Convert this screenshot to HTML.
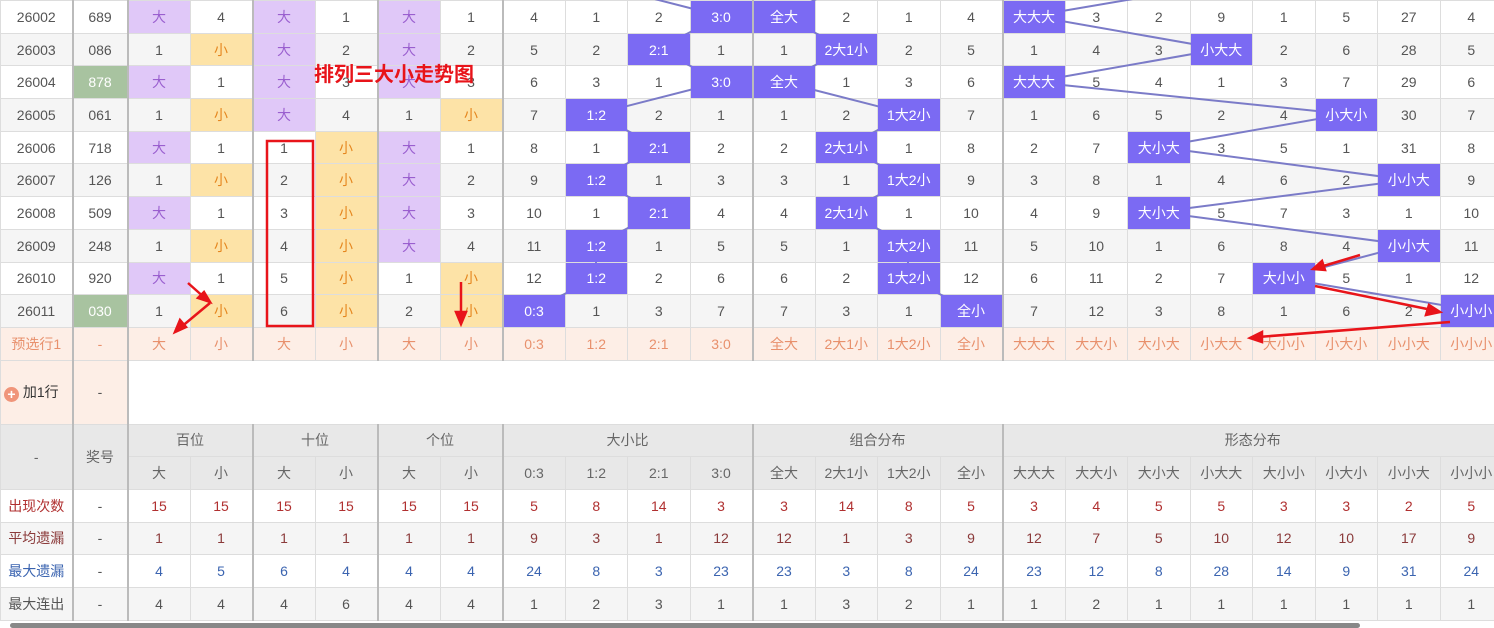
<!DOCTYPE html>
<html><head><meta charset="utf-8"><style>
html,body{margin:0;padding:0;width:1494px;height:628px;overflow:hidden;background:#fff}
body{position:relative;font-family:"Liberation Sans","Noto Sans CJK SC",sans-serif;font-size:14px;color:#555}
table{border-collapse:collapse;table-layout:fixed;width:1502px;position:absolute;left:0;top:0}
td{border:1px solid #ddd;text-align:center;padding:0;height:32.7px;box-sizing:border-box;white-space:nowrap;overflow:hidden}
tr.d td:nth-child(2),tr.d td:nth-child(3),tr.d td:nth-child(5),tr.d td:nth-child(7),tr.d td:nth-child(9),tr.d td:nth-child(13),tr.d td:nth-child(17){border-left:2px solid #bbb}
tr.g td{background:#f5f5f5}
td.b{background:#e0c8f8 !important;color:#9a5fcf}
td.s{background:#fde3a7 !important;color:#e5861e}
td.h{background:#7b6af3 !important;color:#fff;position:relative;z-index:3}
td.w{background:#a8c3a0 !important;color:#fff}
tr.p td{background:#fdeee6;color:#e8906c}
tr.hd td{background:#e8e8e8;color:#666}
.r1{color:#b03030}.r2{color:#8b3a3a}.r3{color:#3b64b0}.r4{color:#555}
svg{position:absolute;left:0;top:0;z-index:2;pointer-events:none}
</style></head><body>
<table>
<colgroup><col style="width:72px"><col style="width:55px"><col span="22" style="width:62.5px"></colgroup>
<tr class="d"><td>26002</td><td>689</td><td class="b">大</td><td>4</td><td class="b">大</td><td>1</td><td class="b">大</td><td>1</td><td>4</td><td>1</td><td>2</td><td class="h">3:0</td><td class="h">全大</td><td>2</td><td>1</td><td>4</td><td class="h">大大大</td><td>3</td><td>2</td><td>9</td><td>1</td><td>5</td><td>27</td><td>4</td></tr>
<tr class="d g"><td>26003</td><td>086</td><td>1</td><td class="s">小</td><td class="b">大</td><td>2</td><td class="b">大</td><td>2</td><td>5</td><td>2</td><td class="h">2:1</td><td>1</td><td>1</td><td class="h">2大1小</td><td>2</td><td>5</td><td>1</td><td>4</td><td>3</td><td class="h">小大大</td><td>2</td><td>6</td><td>28</td><td>5</td></tr>
<tr class="d"><td>26004</td><td class="w">878</td><td class="b">大</td><td>1</td><td class="b">大</td><td>3</td><td class="b">大</td><td>3</td><td>6</td><td>3</td><td>1</td><td class="h">3:0</td><td class="h">全大</td><td>1</td><td>3</td><td>6</td><td class="h">大大大</td><td>5</td><td>4</td><td>1</td><td>3</td><td>7</td><td>29</td><td>6</td></tr>
<tr class="d g"><td>26005</td><td>061</td><td>1</td><td class="s">小</td><td class="b">大</td><td>4</td><td>1</td><td class="s">小</td><td>7</td><td class="h">1:2</td><td>2</td><td>1</td><td>1</td><td>2</td><td class="h">1大2小</td><td>7</td><td>1</td><td>6</td><td>5</td><td>2</td><td>4</td><td class="h">小大小</td><td>30</td><td>7</td></tr>
<tr class="d"><td>26006</td><td>718</td><td class="b">大</td><td>1</td><td>1</td><td class="s">小</td><td class="b">大</td><td>1</td><td>8</td><td>1</td><td class="h">2:1</td><td>2</td><td>2</td><td class="h">2大1小</td><td>1</td><td>8</td><td>2</td><td>7</td><td class="h">大小大</td><td>3</td><td>5</td><td>1</td><td>31</td><td>8</td></tr>
<tr class="d g"><td>26007</td><td>126</td><td>1</td><td class="s">小</td><td>2</td><td class="s">小</td><td class="b">大</td><td>2</td><td>9</td><td class="h">1:2</td><td>1</td><td>3</td><td>3</td><td>1</td><td class="h">1大2小</td><td>9</td><td>3</td><td>8</td><td>1</td><td>4</td><td>6</td><td>2</td><td class="h">小小大</td><td>9</td></tr>
<tr class="d"><td>26008</td><td>509</td><td class="b">大</td><td>1</td><td>3</td><td class="s">小</td><td class="b">大</td><td>3</td><td>10</td><td>1</td><td class="h">2:1</td><td>4</td><td>4</td><td class="h">2大1小</td><td>1</td><td>10</td><td>4</td><td>9</td><td class="h">大小大</td><td>5</td><td>7</td><td>3</td><td>1</td><td>10</td></tr>
<tr class="d g"><td>26009</td><td>248</td><td>1</td><td class="s">小</td><td>4</td><td class="s">小</td><td class="b">大</td><td>4</td><td>11</td><td class="h">1:2</td><td>1</td><td>5</td><td>5</td><td>1</td><td class="h">1大2小</td><td>11</td><td>5</td><td>10</td><td>1</td><td>6</td><td>8</td><td>4</td><td class="h">小小大</td><td>11</td></tr>
<tr class="d"><td>26010</td><td>920</td><td class="b">大</td><td>1</td><td>5</td><td class="s">小</td><td>1</td><td class="s">小</td><td>12</td><td class="h">1:2</td><td>2</td><td>6</td><td>6</td><td>2</td><td class="h">1大2小</td><td>12</td><td>6</td><td>11</td><td>2</td><td>7</td><td class="h">大小小</td><td>5</td><td>1</td><td>12</td></tr>
<tr class="d g"><td>26011</td><td class="w">030</td><td>1</td><td class="s">小</td><td>6</td><td class="s">小</td><td>2</td><td class="s">小</td><td class="h">0:3</td><td>1</td><td>3</td><td>7</td><td>7</td><td>3</td><td>1</td><td class="h">全小</td><td>7</td><td>12</td><td>3</td><td>8</td><td>1</td><td>6</td><td>2</td><td class="h">小小小</td></tr>
<tr class="d p"><td>预选行1</td><td>-</td><td>大</td><td>小</td><td>大</td><td>小</td><td>大</td><td>小</td><td>0:3</td><td>1:2</td><td>2:1</td><td>3:0</td><td>全大</td><td>2大1小</td><td>1大2小</td><td>全小</td><td>大大大</td><td>大大小</td><td>大小大</td><td>小大大</td><td>大小小</td><td>小大小</td><td>小小大</td><td>小小小</td></tr>
<tr><td style="height:64px;background:#fdeee6;color:#333;border-right:2px solid #bbb;text-align:left;padding-left:3px"><span style="display:inline-block;width:15px;height:15px;border-radius:50%;background:#f0957a;color:#fff;font-size:14px;line-height:14px;text-align:center;vertical-align:-2px;font-weight:bold">+</span> 加1行</td><td style="background:#fdeee6;border-right:2px solid #bbb">-</td><td colspan="22" style="border:none;border-bottom:1px solid #ddd"></td></tr>
<tr class="hd"><td rowspan="2" style="border-right:2px solid #bbb">-</td><td rowspan="2" style="border-right:2px solid #bbb">奖号</td><td colspan="2" style="border-right:2px solid #bbb">百位</td><td colspan="2" style="border-right:2px solid #bbb">十位</td><td colspan="2" style="border-right:2px solid #bbb">个位</td><td colspan="4" style="border-right:2px solid #bbb">大小比</td><td colspan="4" style="border-right:2px solid #bbb">组合分布</td><td colspan="8">形态分布</td></tr>
<tr class="hd"><td>大</td><td style="border-right:2px solid #bbb">小</td><td>大</td><td style="border-right:2px solid #bbb">小</td><td>大</td><td style="border-right:2px solid #bbb">小</td><td>0:3</td><td>1:2</td><td>2:1</td><td style="border-right:2px solid #bbb">3:0</td><td>全大</td><td>2大1小</td><td>1大2小</td><td style="border-right:2px solid #bbb">全小</td><td>大大大</td><td>大大小</td><td>大小大</td><td>小大大</td><td>大小小</td><td>小大小</td><td>小小大</td><td>小小小</td></tr>
<tr class="d r1"><td>出现次数</td><td style="color:#555">-</td><td>15</td><td>15</td><td>15</td><td>15</td><td>15</td><td>15</td><td>5</td><td>8</td><td>14</td><td>3</td><td>3</td><td>14</td><td>8</td><td>5</td><td>3</td><td>4</td><td>5</td><td>5</td><td>3</td><td>3</td><td>2</td><td>5</td></tr>
<tr class="d g r2"><td>平均遗漏</td><td style="color:#555">-</td><td>1</td><td>1</td><td>1</td><td>1</td><td>1</td><td>1</td><td>9</td><td>3</td><td>1</td><td>12</td><td>12</td><td>1</td><td>3</td><td>9</td><td>12</td><td>7</td><td>5</td><td>10</td><td>12</td><td>10</td><td>17</td><td>9</td></tr>
<tr class="d r3"><td>最大遗漏</td><td style="color:#555">-</td><td>4</td><td>5</td><td>6</td><td>4</td><td>4</td><td>4</td><td>24</td><td>8</td><td>3</td><td>23</td><td>23</td><td>3</td><td>8</td><td>24</td><td>23</td><td>12</td><td>8</td><td>28</td><td>14</td><td>9</td><td>31</td><td>24</td></tr>
<tr class="d g r4"><td>最大连出</td><td>-</td><td>4</td><td>4</td><td>4</td><td>6</td><td>4</td><td>4</td><td>1</td><td>2</td><td>3</td><td>1</td><td>1</td><td>3</td><td>2</td><td>1</td><td>1</td><td>2</td><td>1</td><td>1</td><td>1</td><td>1</td><td>1</td><td>1</td></tr>
</table>
<svg width="1494" height="628" viewBox="0 0 1494 628">
<g fill="none" stroke="#7b7bc8" stroke-width="2">
<polyline points="596,-16 721,16 658,49 721,82 596,114 658,147 596,180 658,212 596,245 596,278 533,310"/>
<polyline points="846,-16 783,16 846,49 783,82 908,114 846,147 908,180 846,212 908,245 908,278 971,310"/>
<polyline points="1221,-16 1033,16 1221,49 1033,82 1346,114 1158,147 1408,180 1158,212 1408,245 1283,278 1471,310"/>
</g>
</svg>
<svg width="1494" height="628" viewBox="0 0 1494 628" style="z-index:5">
<text x="314" y="81" font-family="Liberation Sans,Noto Sans CJK SC,sans-serif" font-size="20" font-weight="bold" fill="#e8141a">排列三大小走势图</text>
<rect x="267" y="141" width="46" height="185" fill="none" stroke="#e8141a" stroke-width="2.5"/>
<g stroke="#e8141a" stroke-width="2.5" fill="#e8141a">
<line x1="188" y1="283" x2="206" y2="299"/><polygon points="210,302 198,298 204,292"/>
<line x1="210" y1="303" x2="180" y2="328"/><polygon points="175,332 180,320 186,327"/>
<line x1="461" y1="282" x2="461" y2="318"/><polygon points="461,324 456,312 466,312"/>
<line x1="1360" y1="255" x2="1320" y2="267"/><polygon points="1313,269 1322,261 1325,270"/>
<line x1="1315" y1="286" x2="1432" y2="310"/><polygon points="1440,312 1426,315 1429,305"/>
<line x1="1450" y1="322" x2="1258" y2="337"/><polygon points="1250,338 1262,332 1262,342"/>
</g>
</svg>
<div style="position:absolute;left:10px;top:623px;width:1350px;height:5px;background:#888;border-radius:3px;z-index:6"></div>
</body></html>
